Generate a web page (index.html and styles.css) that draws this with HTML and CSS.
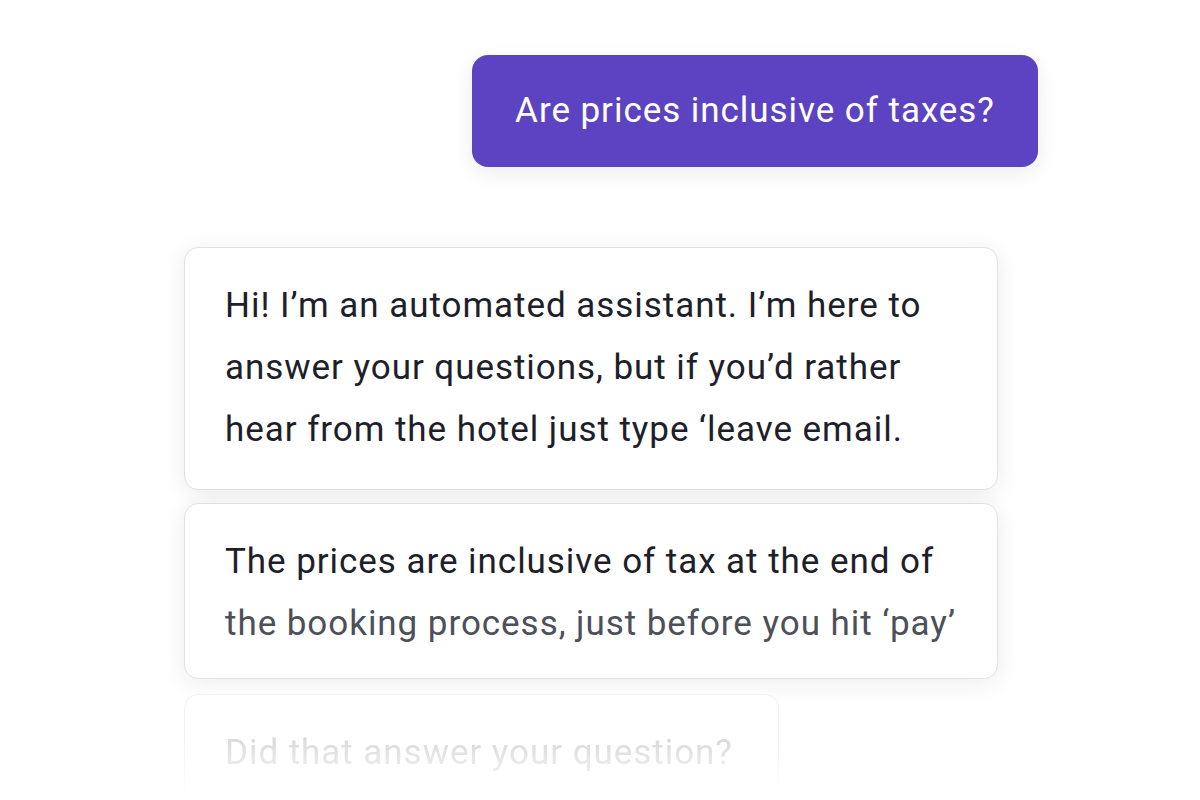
FILE: index.html
```html
<!DOCTYPE html>
<html>
<head>
<meta charset="utf-8">
<link rel="stylesheet" href="styles.css">
</head>
<body>
<div class="chat">
  <div class="bubble-user">Are prices inclusive of taxes?</div>
  <div class="bot-group">
    <div class="card card-first">
      <p class="line">Hi! I’m an automated assistant. I’m here to<br>answer your questions, but if you’d rather<br>hear from the hotel just type ‘leave email.</p>
    </div>
    <div class="card card-second">
      <p class="line"><span class="dark">The prices are inclusive of tax at the end of</span><br><span class="mid">the booking process, just before you hit ‘pay’</span></p>
    </div>
    <div class="card card-faded">
      <p class="line">Did that answer your question?</p>
    </div>
  </div>
</div>
</body>
</html>
```

FILE: styles.css
```css
* { box-sizing: border-box; }
html, body {
  margin: 0;
  padding: 0;
  background: #ffffff;
  width: 1200px;
  height: 800px;
  overflow: hidden;
}
body {
  font-family: Roboto, "Liberation Sans", sans-serif;
}
.chat {
  width: 854px;
  margin-left: 184px;
  padding-top: 55px;
  display: flex;
  flex-direction: column;
}
.bubble-user {
  align-self: flex-end;
  width: 566px;
  height: 112px;
  background: #5c43c1;
  color: #ffffff;
  border-radius: 16px;
  font-size: 35px;
  letter-spacing: 0.95px;
  line-height: 62px;
  padding: 25px 0;
  text-align: center;
  box-shadow: 0 6px 22px rgba(0, 0, 0, 0.08);
}
.bot-group {
  margin-top: 80px;
  display: flex;
  flex-direction: column;
  gap: 13px;
}
.card {
  width: 814px;
  background: #ffffff;
  border: 1px solid #e1e1e3;
  border-radius: 14px;
  padding: 27px 40px 28px;
  box-shadow: 0 4px 26px rgba(0, 0, 0, 0.08);
}
.line {
  margin: 0;
  font-size: 35px;
  letter-spacing: 0.95px;
  line-height: 62px;
  color: #1e2029;
  white-space: nowrap;
}
.dark { color: #1e2029; }
.mid { color: #4d4f59; }
.card-second { padding-bottom: 23px; }
.card-faded {
  margin-top: 2px;
  width: 595px;
  height: 110px;
  border-color: #f0f0f0;
  box-shadow: 0 4px 26px rgba(0, 0, 0, 0.03);
  -webkit-mask-image: linear-gradient(to bottom, #000 40%, rgba(0,0,0,0) 95%);
  mask-image: linear-gradient(to bottom, #000 40%, rgba(0,0,0,0) 95%);
}
.card-faded .line { color: #d9d9db; }
```
